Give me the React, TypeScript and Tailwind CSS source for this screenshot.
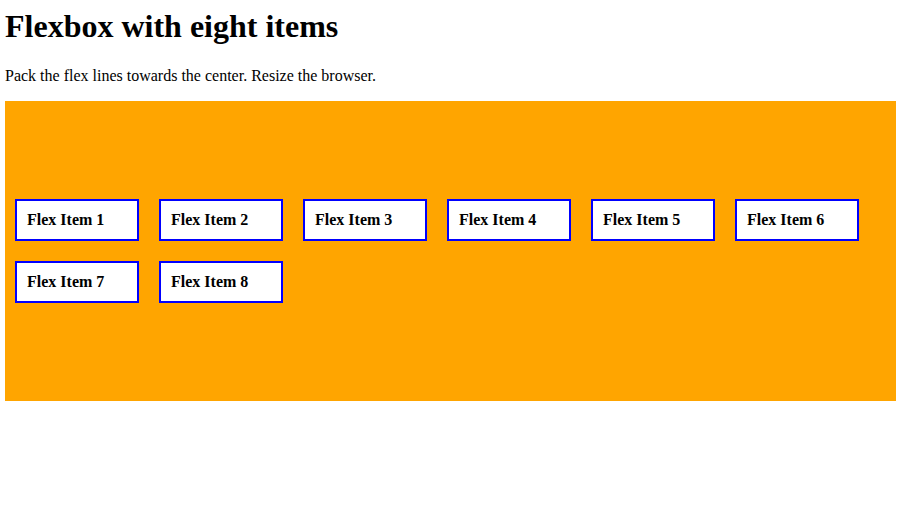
import React from "react";

export default function App() {
  const items = [1, 2, 3, 4, 5, 6, 7, 8];
  return (
    <div className="px-[5px] pt-[8px] font-['Liberation_Serif','Times_New_Roman',serif] text-black bg-white min-h-[512px]">
      <h1 className="text-[32px] font-bold leading-[normal] m-0">Flexbox with eight items</h1>
      <p className="text-[16px] leading-[normal] mt-[22px] mb-[16px]">Pack the flex lines towards the center. Resize the browser.</p>
      <div className="flex flex-wrap content-center h-[300px] bg-[#ffa500]">
        {items.map((n) => (
          <div
            key={n}
            className="w-[124px] m-[10px] p-[10px] border-2 border-[#0000ff] bg-white text-[16px] font-bold leading-[18px]"
          >
            Flex Item {n}
          </div>
        ))}
      </div>
    </div>
  );
}
